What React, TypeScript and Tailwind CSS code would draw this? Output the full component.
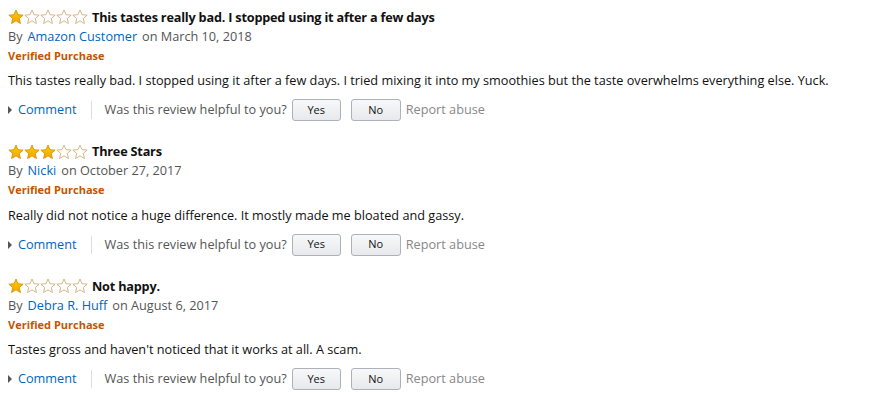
import React from "react";

const Star = ({ filled }: { filled: boolean }) => (
  <svg width="16" height="16" viewBox="0 0 24 24" className="shrink-0">
    <defs>
      <linearGradient id="sg" x1="0" y1="0" x2="0" y2="1">
        <stop offset="0" stopColor="#ffce00" />
        <stop offset="1" stopColor="#f0a500" />
      </linearGradient>
    </defs>
    <path
      d="M12 1.5l3.05 7.1 7.7.6-5.85 5.05 1.8 7.55L12 17.8l-6.7 4 1.8-7.55L1.25 9.2l7.7-.6z"
      fill={filled ? "url(#sg)" : "#ffffff"}
      stroke={filled ? "#d08a00" : "#c9a56a"}
      strokeWidth="1.2"
      strokeLinejoin="round"
    />
  </svg>
);

type Review = {
  stars: number;
  title: string;
  author: string;
  date: string;
  body: string;
};

const reviews: Review[] = [
  {
    stars: 1,
    title: "This tastes really bad. I stopped using it after a few days",
    author: "Amazon Customer",
    date: "March 10, 2018",
    body: "This tastes really bad. I stopped using it after a few days. I tried mixing it into my smoothies but the taste overwhelms everything else. Yuck.",
  },
  {
    stars: 3,
    title: "Three Stars",
    author: "Nicki",
    date: "October 27, 2017",
    body: "Really did not notice a huge difference. It mostly made me bloated and gassy.",
  },
  {
    stars: 1,
    title: "Not happy.",
    author: "Debra R. Huff",
    date: "August 6, 2017",
    body: "Tastes gross and haven't noticed that it works at all. A scam.",
  },
];

const ReviewBlock = ({ r }: { r: Review }) => (
  <div className="flex flex-col h-[134.5px]">
    <div className="flex items-center h-[19px] gap-[4px]">
      <div className="flex -mt-[1px]">
        {[0, 1, 2, 3, 4].map((i) => (
          <Star key={i} filled={i < r.stars} />
        ))}
      </div>
      <span className="text-[12.7px] font-bold text-[#111111] tracking-[-0.2px]">{r.title}</span>
    </div>
    <div className="h-[19px] flex items-center text-[12.7px] text-[#555555]">
      <span>By</span>
      <span className="ml-[5px] text-[#0066c0]">{r.author}</span>
      <span className="ml-[5px]">on {r.date}</span>
    </div>
    <div className="h-[20px] flex items-center text-[11px] font-bold text-[#c45500]">
      Verified Purchase
    </div>
    <div className="h-[28px] flex items-center text-[12.7px] text-[#111111] mt-[1px]">
      {r.body}
    </div>
    <div className="h-[30px] flex items-center text-[12.7px]">
      <span className="w-0 h-0 border-y-[4px] border-y-transparent border-l-[4px] border-l-[#555555] mr-[6px]" />
      <span className="text-[#0066c0]">Comment</span>
      <span className="w-px h-[18px] bg-[#dddddd] ml-[14px] mr-[13px]" />
      <span className="text-[#555555]">Was this review helpful to you?</span>
      <button className="ml-[5px] w-[49px] h-[22px] rounded-[3px] border border-[#adb1b8] bg-gradient-to-b from-[#f7f8fa] to-[#e7e9ec] text-[11px] text-[#111111]">
        Yes
      </button>
      <button className="ml-[10px] w-[50px] h-[22px] rounded-[3px] border border-[#adb1b8] bg-gradient-to-b from-[#f7f8fa] to-[#e7e9ec] text-[11px] text-[#111111]">
        No
      </button>
      <span className="ml-[5px] text-[#888888]">Report abuse</span>
    </div>
  </div>
);

export default function App() {
  return (
    <div
      className="w-[872px] h-[401px] bg-white pl-[8px] pt-[8px] overflow-hidden"
      style={{ fontFamily: '"Open Sans", Arial, sans-serif' }}
    >
      {reviews.map((r, i) => (
        <ReviewBlock key={i} r={r} />
      ))}
    </div>
  );
}
